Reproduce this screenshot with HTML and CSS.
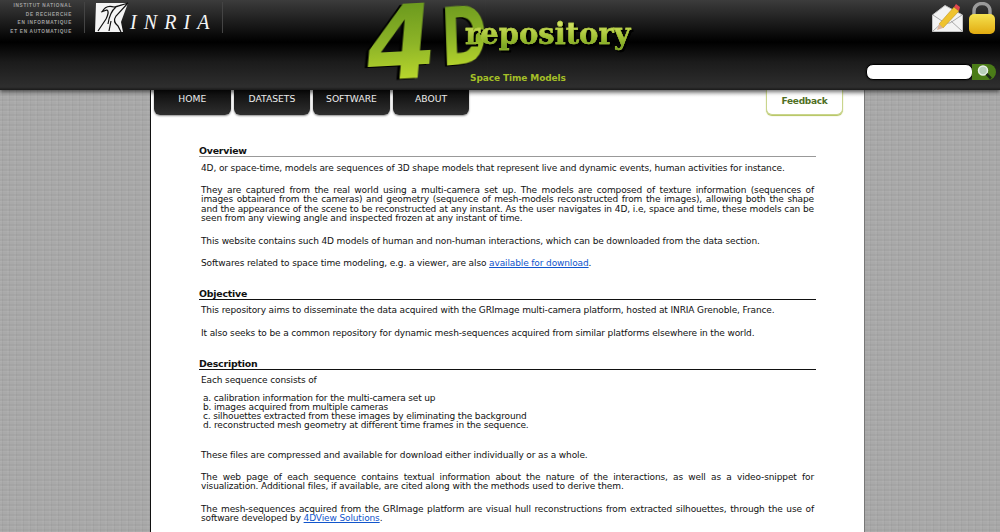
FILE: index.html
```html
<!DOCTYPE html>
<html lang="en">
<head>
<meta charset="utf-8">
<title>4D Repository</title>
<link rel="stylesheet" href="styles.css">
</head>
<body>
<header class="top">
  <div class="inria">
    <div class="inst">INSTITUT NATIONAL<br>DE RECHERCHE<br>EN INFORMATIQUE<br>ET EN AUTOMATIQUE</div>
    <div class="inria-mark">
      <svg class="bird" width="34" height="31" viewBox="0 0 34 31" aria-hidden="true">
        <path fill="#f4f4f4" d="M1 1H33L26 20L28 30H0Z"/>
        <path fill="none" stroke="#111" stroke-width="1.2" d="M33 1C26 3 22 5 19 5C13 3 9 6 7 10M6 10L12 8C14 9 13 13 11 17L3 29M33 1L21 14C19 17 19 21 23 24L26 30M16 19L14 29M21 5C16 9 14 15 13 22"/>
      </svg>
      <span class="inria-name">INRIA</span>
    </div>
  </div>
  <div class="logo">
    <span class="logo-four">4</span>
    <span class="logo-d">D</span>
    <span class="logo-repo">repository</span>
    <span class="logo-tag">Space Time Models</span>
  </div>
  <div class="tools">
    <div class="tool-icons">
      <svg width="31" height="30" viewBox="0 0 31 30" aria-hidden="true">
        <path fill="#f3f3f3" stroke="#c4c4c4" d="M.5 13L13 3.5L30.5 13V29.5H.5Z"/>
        <path fill="none" stroke="#aaa" d="M1 29L12 19M30 29L19 19M1 13L13 21H18L30 13"/>
        <path fill="#efc32f" stroke="#b58a1a" stroke-width=".5" d="M7 22L22 5L27 9L11 26Z"/>
        <path fill="#dcb498" d="M7 22L11 26L5 28Z"/>
        <path fill="#e2484f" d="M22 5L24 2L28 5L27 9Z"/>
      </svg>
      <svg width="28" height="32" viewBox="0 0 28 32" aria-hidden="true">
        <defs>
          <linearGradient id="gold" x1="0" y1="0" x2="0" y2="1">
            <stop offset="0" stop-color="#f5e250"/>
            <stop offset="1" stop-color="#e2ab10"/>
          </linearGradient>
        </defs>
        <path fill="none" stroke="#9a9a9a" stroke-width="3.4" d="M6 15V9C6 -1 22 -1 22 9V15"/>
        <rect x="1" y="12" width="26" height="20" rx="5" fill="url(#gold)"/>
      </svg>
    </div>
    <form class="search">
      <input class="search-input" type="text" aria-label="Search">
      <span class="search-btn">
        <svg width="18" height="16" viewBox="0 0 18 16" aria-hidden="true">
          <circle cx="8" cy="6.5" r="4.5" fill="#b9d0ba" stroke="#e8efe8" stroke-width="1.5"/>
          <path stroke="#1d2a18" stroke-width="2.5" d="M11.5 10L16 14.5"/>
        </svg>
      </span>
    </form>
  </div>
</header>
<main class="page">
  <div class="bar">
    <nav class="tabs">
      <a class="tab">HOME</a>
      <a class="tab">DATASETS</a>
      <a class="tab">SOFTWARE</a>
      <a class="tab">ABOUT</a>
    </nav>
    <a class="feedback">Feedback</a>
  </div>
  <section class="sec first">
    <h2 class="sec-title">Overview</h2>
    <p>4D, or space-time, models are sequences of 3D shape models that represent live and dynamic events, human activities for instance.</p>
    <p><span class="full-line">They are captured from the real world using a multi-camera set up. The models are composed of texture information (sequences of</span> images obtained from the cameras) and geometry (sequence of mesh-models reconstructed from the images), allowing both the shape and the appearance of the scene to be reconstructed at any instant. As the user navigates in 4D, i.e, space and time, these models can be seen from any viewing angle and inspected frozen at any instant of time.</p>
    <p>This website contains such 4D models of human and non-human interactions, which can be downloaded from the data section.</p>
    <p>Softwares related to space time modeling, e.g. a viewer, are also <a class="link">available for download</a>.</p>
  </section>
  <section class="sec">
    <h2 class="sec-title">Objective</h2>
    <p>This repository aims to disseminate the data acquired with the GRImage multi-camera platform, hosted at INRIA Grenoble, France.</p>
    <p>It also seeks to be a common repository for dynamic mesh-sequences acquired from similar platforms elsewhere in the world.</p>
  </section>
  <section class="sec">
    <h2 class="sec-title">Description</h2>
    <p class="lead">Each sequence consists of</p>
    <ol class="items">
      <li>calibration information for the multi-camera set up</li>
      <li>images acquired from multiple cameras</li>
      <li>silhouettes extracted from these images by eliminating the background</li>
      <li>reconstructed mesh geometry at different time frames in the sequence.</li>
    </ol>
    <p>These files are compressed and available for download either individually or as a whole.</p>
    <p>The web page of each sequence contains textual information about the nature of the interactions, as well as a video-snippet for visualization. Additional files, if available, are cited along with the methods used to derive them.</p>
    <p>The mesh-sequences acquired from the GRImage platform are visual hull reconstructions from extracted silhouettes, through the use of software developed by <a class="link">4DView Solutions</a>.</p>
  </section>
</main>
</body>
</html>
```

FILE: styles.css
```css
* { box-sizing: border-box; }
html, body { margin: 0; height: 532px; overflow: hidden; }
body {
  background-color: #a9a9a9;
  background-image:
    repeating-linear-gradient(0deg, rgba(255,255,255,.035) 0 1px, rgba(0,0,0,.03) 1px 3px, transparent 3px 5px),
    repeating-linear-gradient(90deg, rgba(255,255,255,.03) 0 2px, rgba(0,0,0,.03) 2px 3px, transparent 3px 7px);
  font-family: "DejaVu Sans", sans-serif;
  color: #111;
}
.top {
  position: relative;
  height: 90px;
  display: flex;
  justify-content: space-between;
  background: linear-gradient(#3c3c3c 0, #141414 28px, #000 42px, #1b1b1b 62px, #2e2e2e 87px, #1a1a1a 90px);
  box-shadow: 0 2px 4px rgba(0,0,0,.55);
  z-index: 2;
}
.inria { display: flex; align-items: flex-start; padding-top: 2px; }
.inst {
  width: 72px;
  padding: 0 12px 0 0;
  height: 31px;
  border-right: 1px solid #444;
  box-sizing: content-box;
  text-align: right;
  font: bold 4.7px/8.5px "Liberation Sans", sans-serif;
  letter-spacing: .72px;
  color: #a0a0a0;
  white-space: nowrap;
}
.inria-mark {
  display: flex;
  align-items: center;
  height: 31px;
  padding: 0 12px 0 10px;
  border-right: 1px solid #444;
  gap: 1px;
}
.bird { display: block; }
.inria-name {
  font: italic 20px/1 "Liberation Serif", serif;
  letter-spacing: 7.1px;
  color: #f4f4f4;
  padding-top: 8px;
  margin-right: -7.1px;
}
.logo {
  position: absolute;
  left: 366px;
  top: 0;
  width: 270px;
  height: 88px;
}
.logo-four, .logo-d {
  position: absolute;
  background: linear-gradient(#6c9a1e 10%, #8db427 50%, #bcd92d 88%);
  -webkit-background-clip: text;
  background-clip: text;
  color: transparent;
  filter: drop-shadow(-3px 1px 0 #000);
}
.logo-four {
  left: -1px;
  top: -6px;
  font: bold 102px/100px "DejaVu Sans", sans-serif;
  transform: rotate(-3deg) skewX(-8deg);
}
.logo-d {
  left: 75px;
  top: -6px;
  font: bold 80px/90px "DejaVu Sans", sans-serif;
  transform: rotate(-5deg) skewX(-3deg) scaleX(.7);
  transform-origin: 0 50%;
}
.logo-repo {
  position: absolute;
  left: 99px;
  top: 16px;
  font: bold 29px/36px "DejaVu Serif", serif;
  background: linear-gradient(#cfe05f 25%, #9fc032 60%, #7aa622 85%);
  -webkit-background-clip: text;
  background-clip: text;
  color: transparent;
  -webkit-text-stroke: .4px #a9c53c;
  filter: drop-shadow(2px 2px 0 #000);
}
.logo-tag {
  position: absolute;
  left: 104px;
  top: 72px;
  font: bold 9px/13px "DejaVu Sans", sans-serif;
  letter-spacing: -.1px;
  color: #a4bf27;
  white-space: nowrap;
}
.tools {
  width: 134px;
  padding: 2px 4px 0 0;
  display: flex;
  flex-direction: column;
  align-items: flex-end;
}
.tool-icons {
  display: flex;
  align-items: flex-start;
  gap: 5px;
  height: 62px;
}
.search { display: flex; margin: 0; align-items: center; }
.search-input {
  width: 107px;
  height: 16px;
  border: 1px solid #000;
  border-radius: 7px;
  background: #fff;
  padding: 0;
  box-shadow: 0 0 2px #000;
}
.search-btn {
  width: 24px;
  height: 16px;
  margin-left: -1px;
  border-radius: 0 8px 8px 0;
  background: #4b7c18;
  display: flex;
  align-items: center;
  justify-content: center;
}
.page {
  width: 715px;
  height: 442px;
  margin-left: 150px;
  background: linear-gradient(#cfcfcf 0, #fff 7px) #fff;
  border-left: 1px solid #111;
  border-right: 1px solid #777;
  padding: 0 48px 0 48px;
  overflow: hidden;
}
.bar {
  display: flex;
  justify-content: space-between;
  height: 56px;
  margin: 0 -27px 0 -46px;
}
.tabs { display: flex; gap: 3px; padding-left: 1px; align-items: flex-start; }
.tab {
  width: 76.6px;
  height: 25px;
  padding-top: 2px;
  background: linear-gradient(#0c0c0c, #2f2f2f);
  border-radius: 0 0 6px 6px;
  box-shadow: 0 1px 2px rgba(0,0,0,.45);
  color: #eee;
  font: 9.2px/14px "DejaVu Sans", sans-serif;
  text-align: center;
}
.feedback {
  width: 77px;
  height: 25px;
  padding-top: 4px;
  background: #fff;
  border: 1px solid #c9d58c;
  border-top: 0;
  border-radius: 0 0 6px 6px;
  box-shadow: 0 1px 1px #b3c25a;
  color: #4f6f24;
  font: bold 9px/14px "DejaVu Sans", sans-serif;
  letter-spacing: -.3px;
  text-align: center;
}
.sec { margin-bottom: 20.8px; }
.sec-title {
  margin: 0 0 6.2px;
  height: 10px;
  font: bold 9.4px/10px "DejaVu Sans", sans-serif;
  letter-spacing: -.2px;
  color: #111;
  border-bottom: 1px solid #111;
  box-sizing: content-box;
}
.first .sec-title { margin-bottom: 6.6px; border-bottom-color: #999; }
p {
  margin: 0 2px 13.2px;
  font-size: 9px;
  letter-spacing: -.125px;
  line-height: 9.33px;
  text-align: justify;
}
.full-line { display: block; text-align-last: justify; }
p.lead { margin-bottom: 8px; }
.items {
  list-style: lower-alpha inside;
  margin: 0 3px 21px 4px;
  padding: 0;
  font-size: 9px;
  letter-spacing: -.15px;
  line-height: 9px;
}
.link { color: #1155cc; text-decoration: underline; }
```
